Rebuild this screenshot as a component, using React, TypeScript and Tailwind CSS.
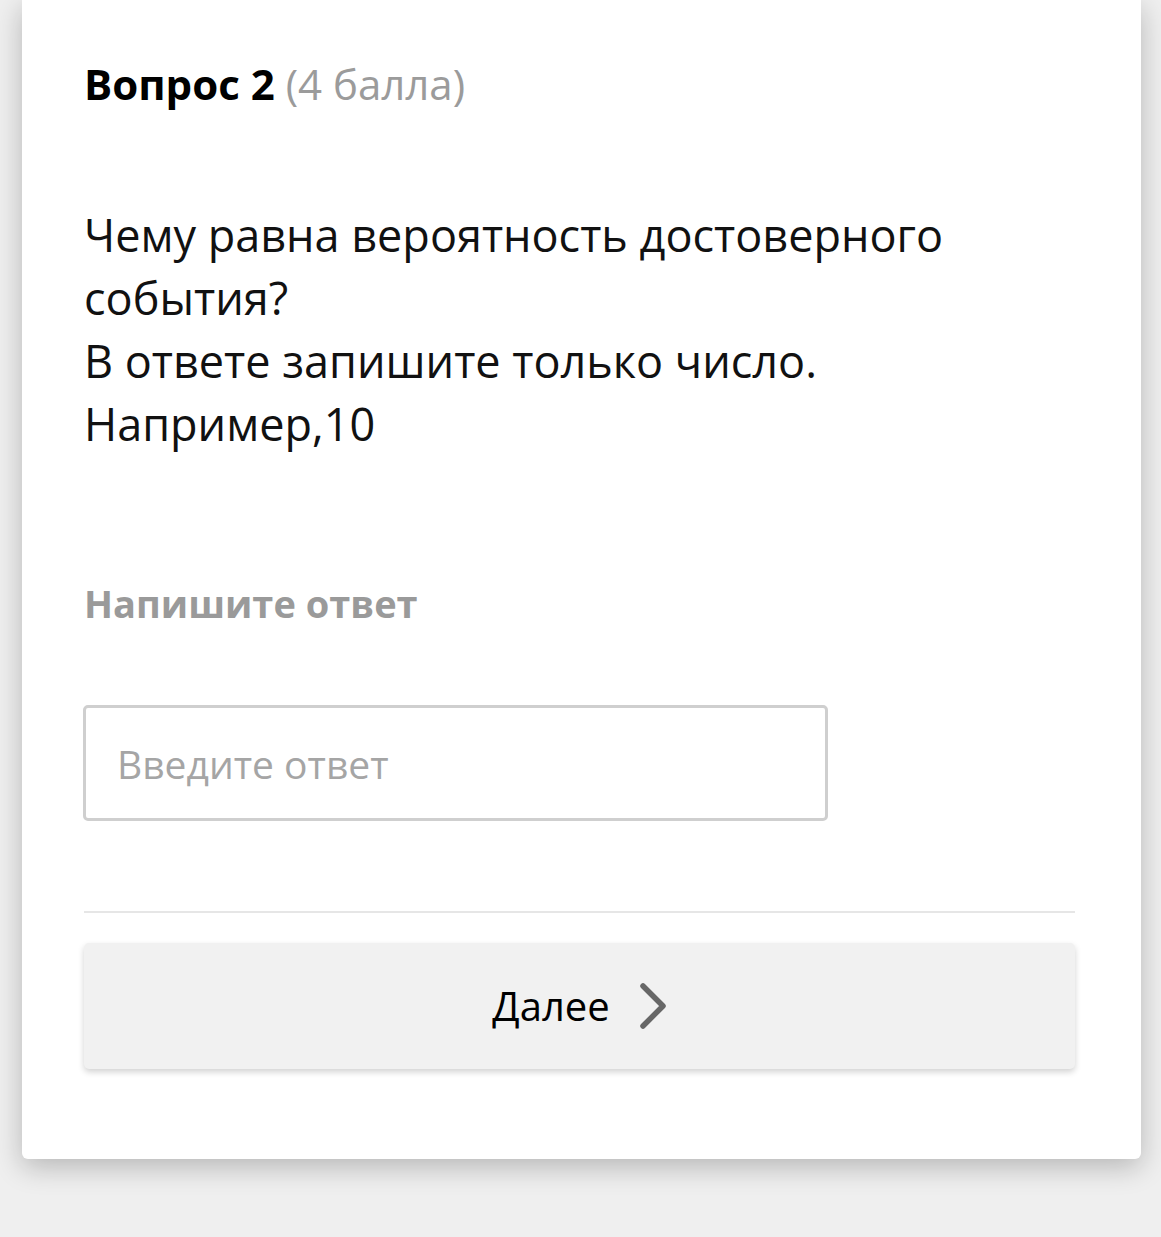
import { useState } from "react";

function ChevronRight() {
  return (
    <svg width="30" height="48" viewBox="0 0 30 48" fill="none" className="ml-[27px]">
      <path
        d="M6 4 L26 24 L6 44"
        stroke="#676767"
        strokeWidth="5.5"
        strokeLinecap="round"
        strokeLinejoin="round"
      />
    </svg>
  );
}

export default function App() {
  const [answer, setAnswer] = useState("");

  return (
    <div
      className="w-[1161px] h-[1237px] bg-[#efefef] overflow-hidden"
      style={{ fontFamily: '"Open Sans", "Noto Sans", sans-serif' }}
    >
      <div className="ml-[22px] w-[1119px] bg-white rounded-b-[6px] shadow-[0_8px_28px_rgba(0,0,0,0.24)] pl-[62px] pr-[66px] pt-[54px] pb-[90px]">
        <h2 className="text-[42px] leading-[60px] text-black">
          <span className="font-bold">Вопрос 2</span>{" "}
          <span className="text-[#9b9b9b]">(4 балла)</span>
        </h2>

        <p className="mt-[89px] text-[45px] leading-[63px] text-[#111]">
          Чему равна вероятность достоверного события?
          <br />
          В ответе запишите только число.
          <br />
          Например,10
        </p>

        <div className="mt-[125px] text-[38px] leading-[46px] font-bold text-[#9a9a9a]">
          Напишите ответ
        </div>

        <input
          value={answer}
          onChange={(e) => setAnswer(e.target.value)}
          placeholder="Введите ответ"
          className="mt-[79px] -ml-px block w-[745px] h-[116px] border-[3px] border-[#cfcfcf] rounded-[5px] px-[31px] text-[39px] text-black placeholder:text-[#a5a5a5] outline-none"
        />

        <div className="mt-[90px] h-[2px] bg-[#e6e6e6]" />

        <button className="mt-[30px] w-full h-[126px] bg-[#f1f1f1] rounded-[5px] shadow-[0_3px_6px_rgba(0,0,0,0.18)] flex items-center justify-center text-[40px] text-black">
          Далее
          <ChevronRight />
        </button>
      </div>
    </div>
  );
}
